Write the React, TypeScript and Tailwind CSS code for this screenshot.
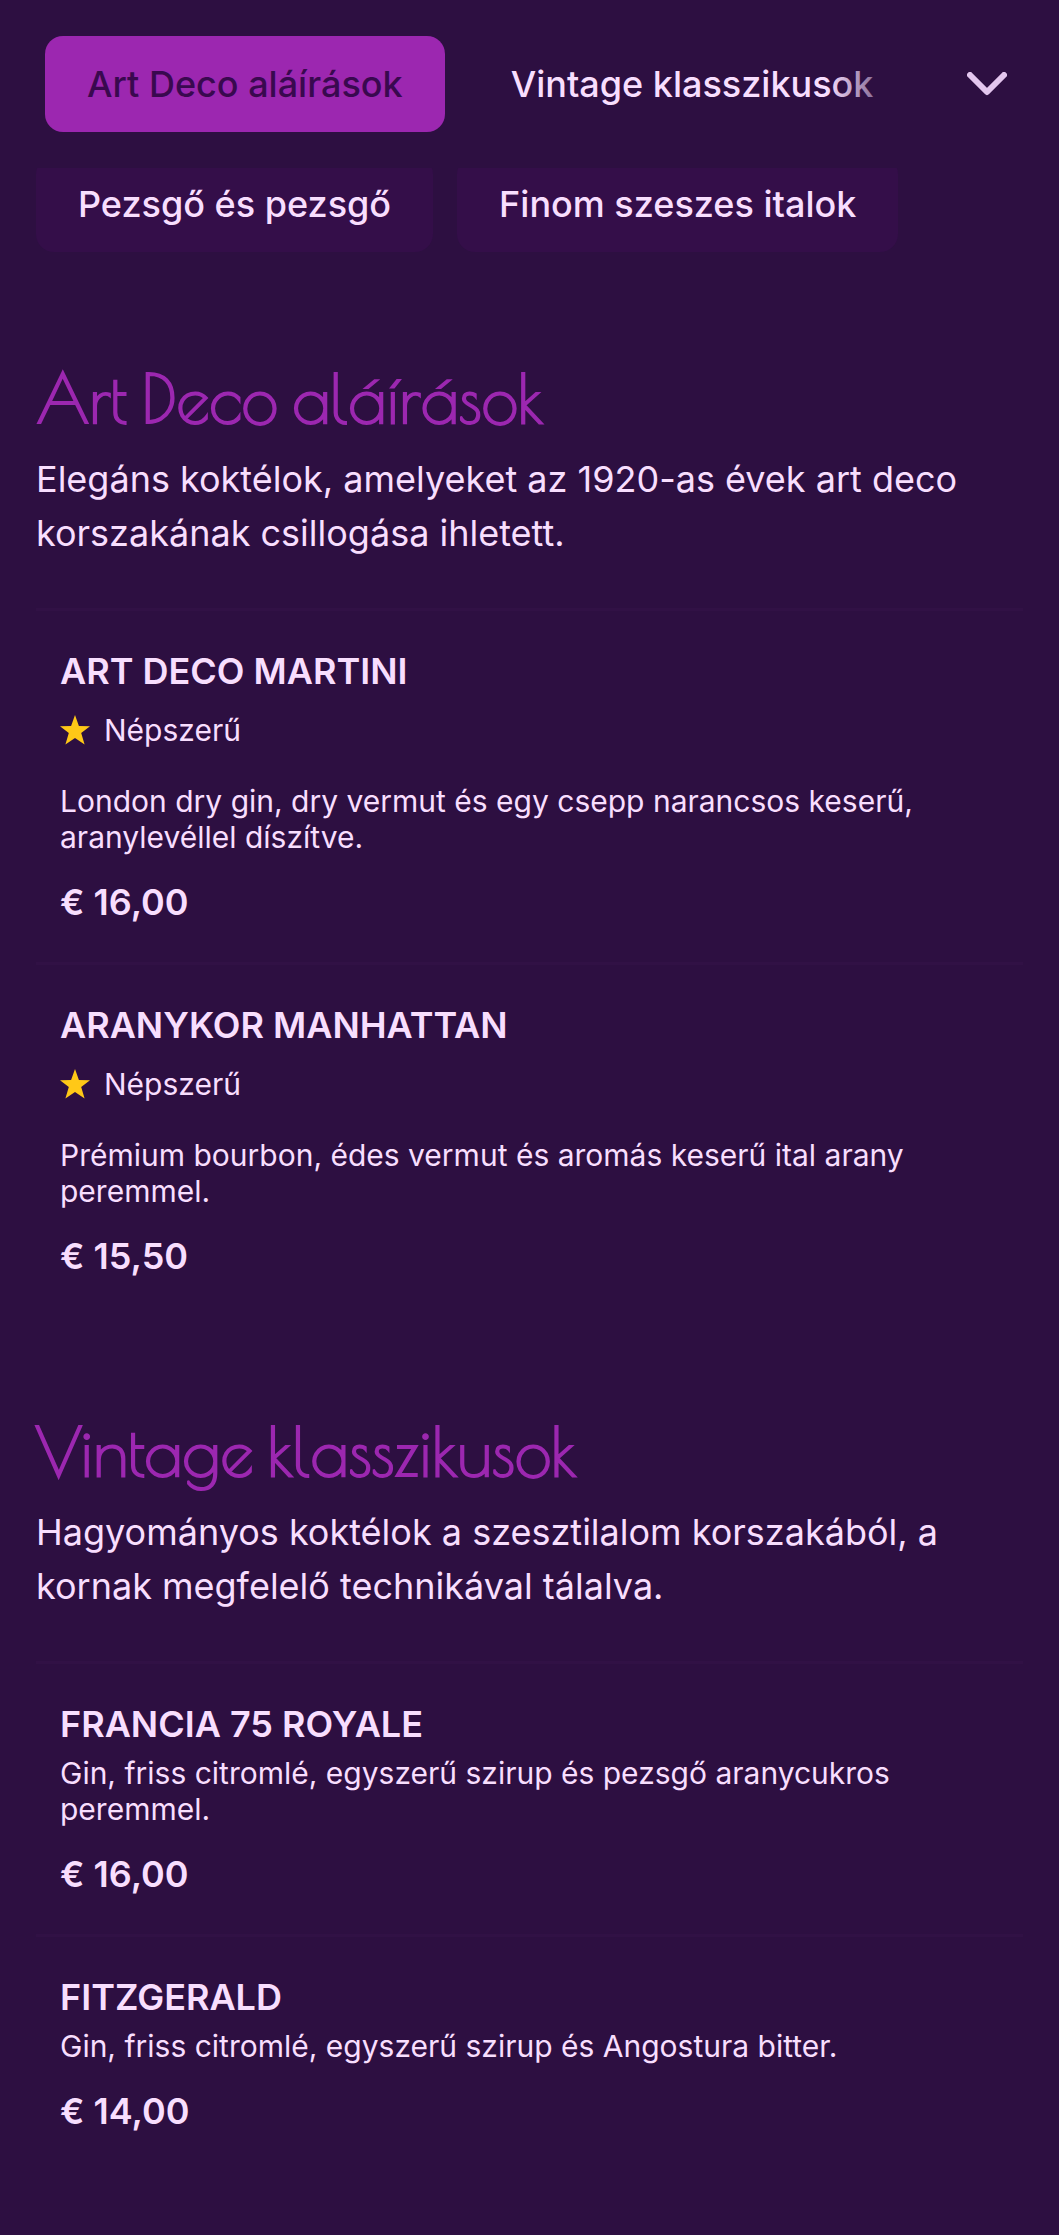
import React, { useState } from 'react';

type MenuItem = {
  name: string;
  description: string;
  price: string;
  popular?: boolean;
};

type MenuSection = {
  id: string;
  title: string;
  intro: string;
  items: MenuItem[];
};

const sections: MenuSection[] = [
  {
    id: 'art-deco',
    title: 'Art Deco aláírások',
    intro: 'Elegáns koktélok, amelyeket az 1920-as évek art deco korszakának csillogása ihletett.',
    items: [
      {
        name: 'Art Deco Martini',
        description: 'London dry gin, dry vermut és egy csepp narancsos keserű, aranylevéllel díszítve.',
        price: '€ 16,00',
        popular: true,
      },
      {
        name: 'Aranykor Manhattan',
        description: 'Prémium bourbon, édes vermut és aromás keserű ital arany peremmel.',
        price: '€ 15,50',
        popular: true,
      },
    ],
  },
  {
    id: 'vintage',
    title: 'Vintage klasszikusok',
    intro: 'Hagyományos koktélok a szesztilalom korszakából, a kornak megfelelő technikával tálalva.',
    items: [
      {
        name: 'Francia 75 Royale',
        description: 'Gin, friss citromlé, egyszerű szirup és pezsgő aranycukros peremmel.',
        price: '€ 16,00',
      },
      {
        name: 'Fitzgerald',
        description: 'Gin, friss citromlé, egyszerű szirup és Angostura bitter.',
        price: '€ 14,00',
      },
    ],
  },
];

const moreCategories = ['Pezsgő és pezsgő', 'Finom szeszes italok'];

const Star: React.FC = () => (
  <svg viewBox="0 0 30 30" className="size-[30px] shrink-0" aria-hidden="true">
    <path
      d="M15 0 L18.9 10.9 L30 11.2 L21.2 18 L24.6 29.6 L15 23 L5.4 29.6 L8.8 18 L0 11.2 L11.1 10.9 Z"
      fill="#ffc817"
    />
  </svg>
);

const StickyNav: React.FC = () => {
  const [active, setActive] = useState('art-deco');

  return (
    <header className="sticky top-0 z-10 flex items-center bg-[#2d0f41] py-9">
      <nav className="relative flex min-w-0 flex-1 gap-6 overflow-hidden pl-[45px]">
        {sections.map((section) => (
          <button
            key={section.id}
            onClick={() => setActive(section.id)}
            className={`h-24 shrink-0 rounded-[18px] px-[42px] font-medium whitespace-nowrap ${
              active === section.id ? 'bg-[#9c27b0] text-[#39094f]' : ''
            }`}
          >
            {section.title}
          </button>
        ))}
        <div className="pointer-events-none absolute inset-y-0 right-0 w-22 bg-linear-to-r from-transparent to-[#2d0f41]" />
      </nav>
      <button aria-label="Kategóriák" className="flex h-24 w-36 items-center justify-center text-[#e3c6ee]">
        <svg viewBox="0 0 40 24" className="h-6 w-10" fill="none" stroke="currentColor" strokeWidth="6" strokeLinecap="round" strokeLinejoin="round">
          <path d="M3 3 L20 20 L37 3" />
        </svg>
      </button>
    </header>
  );
};

const Item: React.FC<{ item: MenuItem }> = ({ item }) => (
  <li className="border-t-3 border-[#311145] px-6 py-[33px]">
    <h3 className="font-semibold uppercase">{item.name}</h3>
    {item.popular && (
      <p className="mt-[14px] mb-[35px] flex items-center gap-[14px] text-[30px] leading-9">
        <Star />
        Népszerű
      </p>
    )}
    <p className="mt-1 text-[30px] leading-9">{item.description}</p>
    <p className="mt-5 font-semibold">{item.price}</p>
  </li>
);

const App: React.FC = () => {
  return (
    <div className="min-h-screen bg-[#2d0f41] font-['Inter',sans-serif] text-[36px] leading-[54px] text-[#f8defe]">
      <StickyNav />
      {/* second row of categories slides under the sticky bar */}
      <div className="-mt-3 flex flex-wrap gap-6 px-9">
        {moreCategories.map((category) => (
          <button key={category} className="h-24 rounded-[18px] bg-[#340e49] px-[42px] font-medium">
            {category}
          </button>
        ))}
      </div>
      <main className="flex flex-col gap-[87px] px-9 pt-[98px] pb-16">
        {sections.map((section) => (
          <section key={section.id}>
            <h2 className="mb-2 pt-1 font-['Poiret_One','Lato',sans-serif] text-[66px] leading-[90px] font-bold text-[#9c27b0]">
              {section.title}
            </h2>
            <p>{section.intro}</p>
            <ul className="mt-12">
              {section.items.map((item) => (
                <Item key={item.name} item={item} />
              ))}
            </ul>
          </section>
        ))}
      </main>
    </div>
  );
};

export default App;
